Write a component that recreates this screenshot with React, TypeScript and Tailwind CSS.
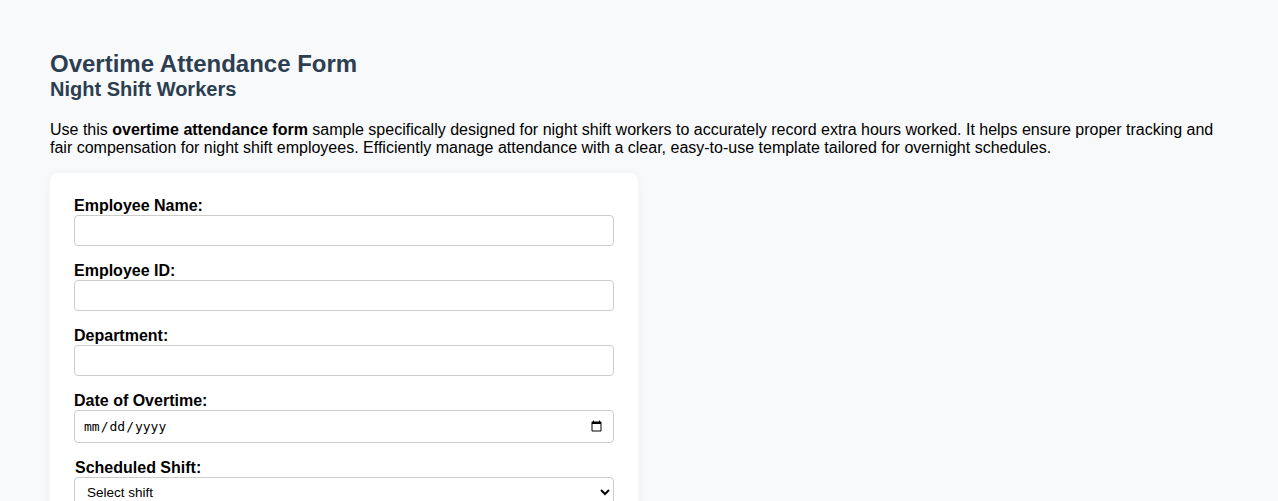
import React from 'react';

const labelCls = 'block text-base font-bold text-black leading-[18px]';
const inputCls =
  'block w-full h-[31px] px-2 bg-white border border-[#ccc] rounded-[4px] text-[13px] outline-none';

const App: React.FC = () => {
  return (
    <div
      className="min-h-screen bg-[#f8f9fa] px-[50px] pt-[50px] pb-10 text-black"
      style={{ fontFamily: '"Liberation Sans", Arial, sans-serif' }}
    >
      <h1 className="text-[24px] font-bold leading-[28px] text-[#2c3e50]">Overtime Attendance Form</h1>
      <h2 className="text-[20px] font-bold leading-[23px] text-[#2c3e50]">Night Shift Workers</h2>

      <p className="mt-5 text-base leading-[18px]">
        Use this <strong>overtime attendance form</strong> sample specifically designed for night shift workers to
        accurately record extra hours worked. It helps ensure proper tracking and fair compensation for night shift
        employees. Efficiently manage attendance with a clear, easy-to-use template tailored for overnight schedules.
      </p>

      {/* Form card */}
      <div className="mt-4 w-[588px] bg-white rounded-[8px] shadow-[0_0_10px_rgba(0,0,0,0.04)] px-6 pt-6 pb-6">
        <div>
          <label className={labelCls}>Employee Name:</label>
          <input type="text" className={inputCls} />
        </div>
        <div className="mt-4">
          <label className={labelCls}>Employee ID:</label>
          <input type="text" className={inputCls} />
        </div>
        <div className="mt-4">
          <label className={labelCls}>Department:</label>
          <input type="text" className={inputCls} />
        </div>
        <div className="mt-4">
          <label className={labelCls}>Date of Overtime:</label>
          <input
            type="date"
            className="block w-full h-[33px] px-2 bg-white border border-[#ccc] rounded-[4px] text-[13px] outline-none"
            style={{ fontFamily: '"DejaVu Sans Mono", monospace' }}
          />
        </div>
        <div className="mt-4">
          <label className={`${labelCls} pl-px`}>Scheduled Shift:</label>
          <select
            className="block w-full h-[31px] px-2 bg-white border border-[#ccc] rounded-[4px] text-[13.5px] outline-none"
            defaultValue=""
          >
            <option value="">Select shift</option>
            <option value="night">Night Shift</option>
            <option value="overnight">Overnight Shift</option>
          </select>
        </div>
        <div className="mt-4">
          <label className={labelCls}>Overtime Hours:</label>
          <input type="number" className={inputCls} />
        </div>
      </div>
    </div>
  );
};

export default App;
